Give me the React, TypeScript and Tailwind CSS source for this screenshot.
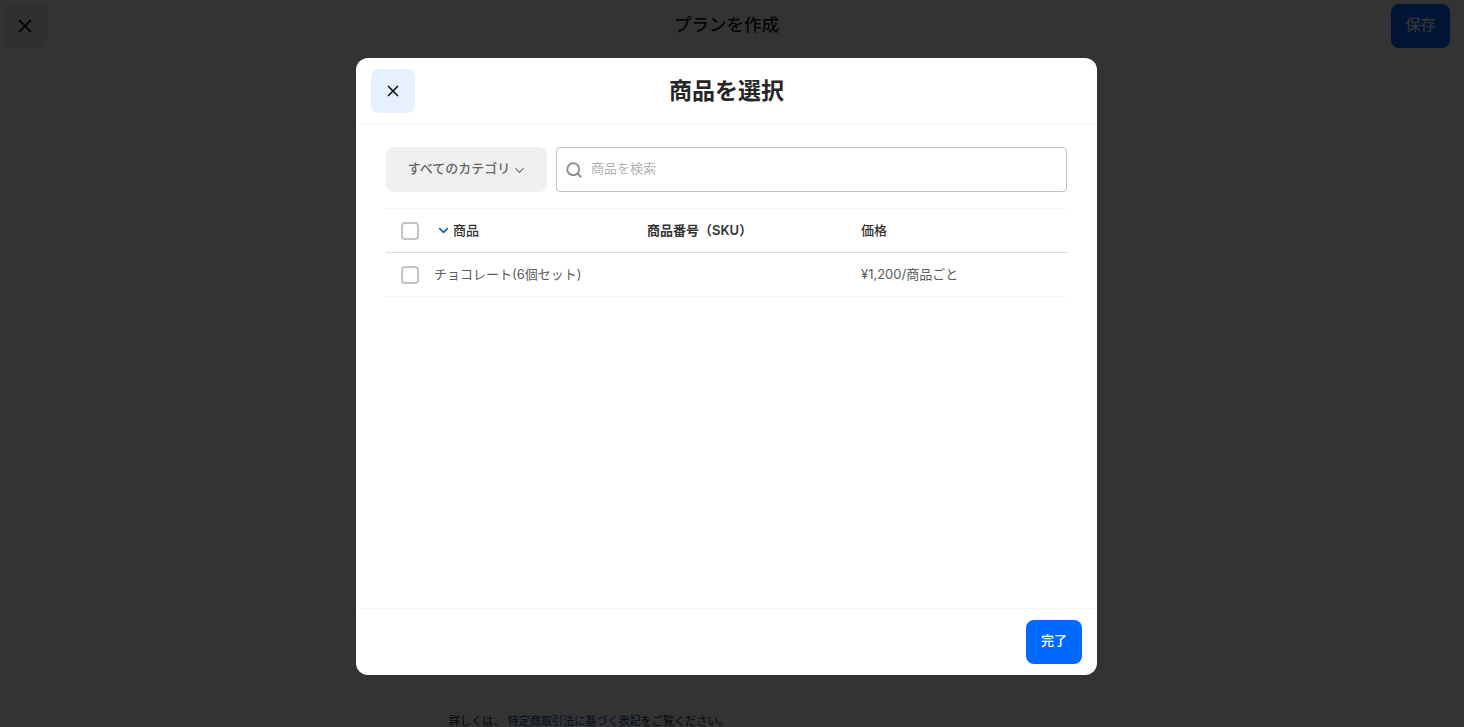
import { ChevronDown, Search, X } from "lucide-react";

const font = "font-['Inter','Noto_Sans_CJK_JP',sans-serif]";

function Checkbox() {
	return <span className="block h-[18px] w-[18px] rounded-[4px] border-2 border-[#c4c4c4] bg-white" />;
}

export default function App() {
	return (
		<div className={`relative h-[727px] w-[1464px] overflow-hidden bg-white ${font}`}>
			{/* Page behind the dialog */}
			<div className="flex h-full w-[1453px] flex-col">
				<header className="grid grid-cols-[1fr_auto_1fr] items-start px-[3px] pt-[3px]">
					<button className="flex h-[45px] w-[44px] items-center justify-center rounded-lg bg-[#f0f0f0] text-[#1a1a1a]">
						<X className="h-[22px] w-[22px]" strokeWidth={2} />
					</button>
					<h1 className="pt-[9px] text-[17.5px] leading-[26px] font-medium text-[#1a1a1a]">プランを作成</h1>
					<button className="mt-px flex h-[44px] w-[59px] items-center justify-center justify-self-end rounded-lg bg-[#006aff] pb-px text-[15px] font-medium text-white">
						保存
					</button>
				</header>
				<p className="mt-auto mb-[-4px] pl-[449px] text-[11.1px] leading-5 text-[#1a1a1a]">
					詳しくは、 <span className="text-[#0a4bb0]">特定商取引法に基づく表記</span>をご覧ください。
				</p>
			</div>

			{/* Dialog overlay */}
			<div className="absolute inset-0 bg-black/80">
				<div className="flex w-[1453px] justify-center pt-[58px]">
					<div className="flex h-[617px] w-[741px] flex-col rounded-xl bg-white">
						<div className="relative flex h-[67px] shrink-0 items-center justify-center border-b border-[#f5f5f5]">
							<button className="absolute top-[11px] left-[15px] flex h-[44px] w-[44px] items-center justify-center rounded-lg bg-[#e6f0ff] text-[#1a1a1a]">
								<X className="h-[18px] w-[18px]" strokeWidth={2.25} />
							</button>
							<h2 className="text-[23px] leading-8 font-semibold text-[#262626]">商品を選択</h2>
						</div>

						<div className="flex-1 px-[30px] pt-[22px]">
							<div className="flex gap-[9px]">
								<button className="flex h-[45px] w-[161px] items-center justify-center gap-[2px] rounded-lg bg-[#f0f0f0] pb-[2px] pl-[2px] text-[13px] font-medium text-[#666666]">
									すべてのカテゴリ
									<ChevronDown className="mt-[4px] h-[15px] w-[15px]" strokeWidth={1.75} />
								</button>
								<div className="flex h-[45px] flex-1 items-center gap-[8px] rounded border border-[#c4c4c4] pl-[8px]">
									<Search className="h-[18px] w-[18px] text-[#8f8f8f]" strokeWidth={2.5} />
									<span className="pb-px text-[13px] text-[#b3b3b3]">商品を検索</span>
								</div>
							</div>

							<div className="mt-4 border-t border-[#f5f5f5]">
								<div className="grid h-[44px] grid-cols-[48px_213px_214px_1fr] items-center border-b border-[#dedede] text-[13px] font-medium text-[#333333]">
									<div className="pl-[15px]">
										<Checkbox />
									</div>
									<div className="flex items-center gap-[2px] pl-[2px]">
										<ChevronDown className="h-[15px] w-[15px] text-[#0a55c4]" strokeWidth={2.5} />
										商品
									</div>
									<div className="font-semibold">商品番号（SKU）</div>
									<div>価格</div>
								</div>
								<div className="grid h-[44px] grid-cols-[48px_213px_214px_1fr] items-center border-b border-[#f5f5f5] text-[13px] text-[#5c5c5c]">
									<div className="pl-[15px]">
										<Checkbox />
									</div>
									<div>チョコレート(6個セット)</div>
									<div />
									<div>¥1,200/商品ごと</div>
								</div>
							</div>
						</div>

						<div className="flex h-[67px] shrink-0 items-start justify-end border-t border-[#f5f5f5] pt-[11px] pr-[15px]">
							<button className="flex h-[44px] w-[56px] items-center justify-center rounded-lg bg-[#006aff] pb-[3px] text-[13px] font-medium text-white">
								完了
							</button>
						</div>
					</div>
				</div>
			</div>
		</div>
	);
}
